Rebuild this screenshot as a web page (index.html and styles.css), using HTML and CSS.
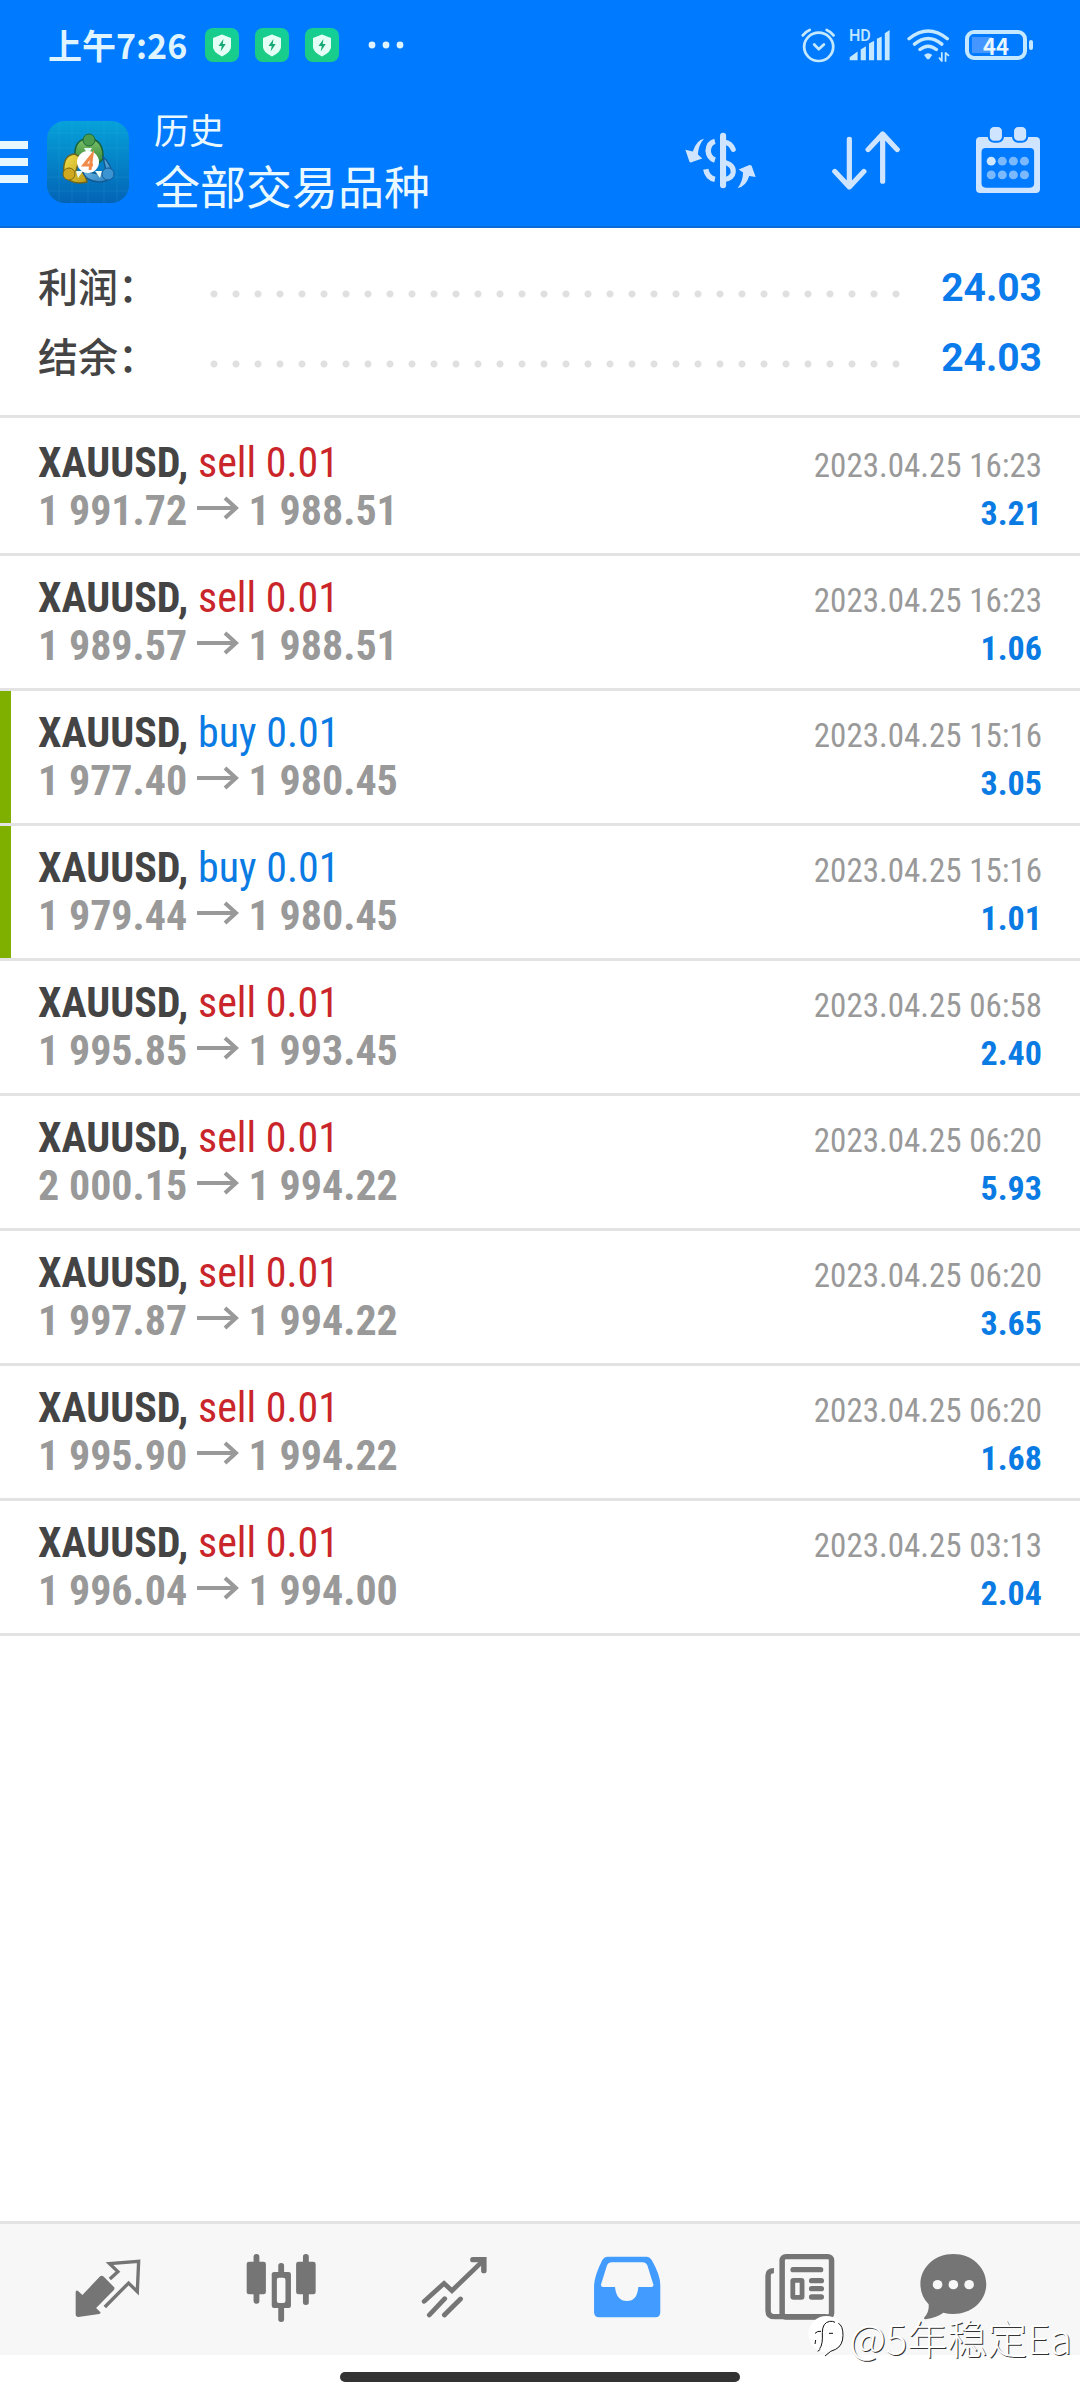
FILE: index.html
```html
<!DOCTYPE html>
<html lang="zh-CN">
<head>
<meta charset="utf-8">
<meta name="viewport" content="width=device-width, initial-scale=1">
<title>历史</title>
<link rel="stylesheet" href="styles.css">
</head>
<body>
<svg class="defs" aria-hidden="true">
  <defs>
    <linearGradient id="shieldBg" x1="0" y1="1" x2="1" y2="0"><stop offset="0" stop-color="#1ecb7c"/><stop offset="1" stop-color="#12cf9c"/></linearGradient>
    <symbol id="shield" viewBox="0 0 34 34">
      <rect width="34" height="34" rx="8" fill="url(#shieldBg)"/>
      <path d="M17 6.500l9 3.500v9q0 5-9 9.500q-9-4.500-9-9.500v-9z" fill="#e6fff6"/>
      <path d="M18.500 11l-5 7h3.200l-1 5.500l5-7.500h-3z" fill="#17a874"/>
    </symbol>
    <symbol id="arrow" viewBox="0 0 42 24">
      <path d="M0 12h39M28 2l11 10l-11 10" fill="none" stroke="#999" stroke-width="4"/>
    </symbol>
  </defs>
</svg>
<header class="top">
  <div class="status">
    <span class="clock">上午7:26</span>
    <div class="notices">
      <svg class="shield"><use href="#shield"/></svg>
      <svg class="shield"><use href="#shield"/></svg>
      <svg class="shield"><use href="#shield"/></svg>
    </div>
    <svg class="more" viewBox="0 0 36 8" fill="#dff4ff"><circle cx="4" cy="4" r="3.400"/><circle cx="18" cy="4" r="3.400"/><circle cx="32" cy="4" r="3.400"/></svg>
    <div class="system">
      <svg class="alarm" viewBox="756 84 104 104" preserveAspectRatio="none" fill="none" stroke="#c4e8ff" stroke-width="8" stroke-linecap="round" stroke-linejoin="round">
        <circle cx="810" cy="140" r="42"/><path d="M797 133l13 14l15-14M764 106q8-11 20-16M853 106q-8-11-20-16"/>
      </svg>
      <div class="signal">
        <span class="hd">HD</span>
        <svg class="bars" viewBox="898 88 122 92" preserveAspectRatio="none" fill="#c4e8ff">
          <path d="M900 178v-9l23-17v26zM932 178v-32l15-10v42zM956 178v-50l15-8v58zM979 178v-64l14-7v71zM1002 178v-80l14-10v90z"/>
        </svg>
      </div>
      <svg class="wifi" viewBox="1062 88 126 104" preserveAspectRatio="none" fill="none" stroke="#c4e8ff" stroke-width="10" stroke-linecap="round">
        <path d="M1068 120q56-46 112 0M1084 136q40-34 80 0M1100 152q24-20 48 0"/>
        <path d="M1112 168q12-10 24 0l-8 11q-4 3-8 0z" fill="#c4e8ff" stroke="none"/>
        <path d="M1164 160v28M1175 188v-28M1156 176l8 11M1175 162l10 9" stroke-width="5" stroke-linecap="butt"/>
      </svg>
      <div class="battery"><span class="level">44</span></div>
    </div>
  </div>
  <div class="toolbar">
    <button class="menu" aria-label="菜单"><span></span><span></span><span></span></button>
    <svg class="logo" viewBox="0 0 82 82">
      <defs>
        <linearGradient id="lb" x1="0" y1="0" x2="0" y2="1"><stop offset="0" stop-color="#06a2da"/><stop offset="1" stop-color="#0363b5"/></linearGradient>
        <linearGradient id="lg" x1="0" y1="0" x2="0" y2="1"><stop offset="0" stop-color="#80c169"/><stop offset="1" stop-color="#2a8437"/></linearGradient>
        <linearGradient id="ly" x1="0" y1="0" x2="1" y2="1"><stop offset="0" stop-color="#f1df4c"/><stop offset="1" stop-color="#bd9a16"/></linearGradient>
        <linearGradient id="lc" x1="0" y1="0" x2="1" y2="1"><stop offset="0" stop-color="#8bd0f0"/><stop offset="1" stop-color="#2178bd"/></linearGradient>
      </defs>
      <rect width="82" height="82" rx="18" fill="url(#lb)"/>
      <path d="M12 0v82M25 0v82M41 0v82M57 0v82M70 0v82M0 12h82M0 27h82M0 56h82M0 70h82" stroke="#4ac4ee" stroke-opacity=".15" fill="none"/>
      <path d="M28 36q-1-16 10-18h8q11 4 10 20l-6 6l-9-10z" fill="url(#lg)" stroke="#17633a" stroke-width="1.500"/>
      <path d="M17 53q-2-19 11-20l5 3l-4 14l9 2l2 9q-17 4-23-8z" fill="url(#ly)" stroke="#6a6520" stroke-width="1.500"/>
      <path d="M56 36q9 7 9 20q-11 9-24 2q-5-4-5-8l16 3l7-3z" fill="url(#lc)" stroke="#145a92" stroke-width="1.500"/>
      <circle cx="42" cy="19" r="6" fill="#4c9c4f" stroke="#1d6a39"/>
      <circle cx="22" cy="53" r="6" fill="#cfa820" stroke="#7a6716"/>
      <circle cx="61" cy="53" r="6" fill="#3b93d2" stroke="#155c98"/>
      <path d="M37 27h8l-4 7zM29 50h7l-5 7zM48 50h7l-2 7z" fill="#e8f8f2"/>
      <circle cx="41" cy="41" r="11" fill="#fff"/>
      <path d="M43 49l2-15l-8 10h9" fill="none" stroke="#f08a48" stroke-width="3"/>
    </svg>
    <div class="titles">
      <h1 class="title">历史</h1>
      <p class="subtitle">全部交易品种</p>
    </div>
    <div class="actions">
      <button class="action" aria-label="货币">
        <svg class="ico-dollar" viewBox="422 396 212 170" preserveAspectRatio="none" fill="none" stroke="#cfe5ff">
          <path d="M537 407v148" stroke-width="18" stroke-linecap="round"/>
          <path d="M540 426q20 3 27 22M540 486q29 8 27 30q-2 18-27 22" stroke-width="15" stroke-linecap="round"/>
          <path d="M513 424q-18 4-20 28q2 22 20 28M486 507q5 26 27 30" stroke-width="16"/>
          <path d="M481 416q-22 3-33 38l-22-5l12 36q4 4 10 0l28-10l-13-12q1-28 18-47zM580 563q24-4 34-36l19 3l-12-33q-4-4-10-1l-28 12l13 9q-1 27-16 46z" fill="#cfe5ff" stroke="none"/>
        </svg>
      </button>
      <button class="action" aria-label="排序">
        <svg class="ico-sort" viewBox="846 396 196 178" preserveAspectRatio="none" fill="none" stroke="#cfe5ff" stroke-width="15" stroke-linecap="round" stroke-linejoin="round">
          <path d="M896 421v144M854 518l42 47l42-47M992 548v-143M950 452l42-47l42 47"/>
        </svg>
      </button>
      <button class="action" aria-label="日期">
        <svg class="ico-cal" viewBox="1268 383 185 197" preserveAspectRatio="none">
          <path fill="#cfe5ff" fill-rule="evenodd" d="M1280 413h161q12 0 12 12v142q0 13-12 13h-161q-12 0-12-13v-142q0-12 12-12zM1296 446q-12 0-12 12v94q0 12 12 12h128q12 0 12-12v-94q0-12-12-12z"/>
          <rect x="1305" y="380" width="41" height="47" rx="15" fill="#cfe5ff" stroke="#007aff" stroke-width="6"/><rect x="1375" y="380" width="41" height="47" rx="15" fill="#cfe5ff" stroke="#007aff" stroke-width="6"/>
          <g fill="#7bb9ff"><circle cx="1312" cy="485" r="13" fill="#cfe8ff"/><circle cx="1344" cy="485" r="13"/><circle cx="1376" cy="485" r="13"/><circle cx="1408" cy="485" r="13"/><circle cx="1312" cy="526" r="13"/><circle cx="1344" cy="526" r="13"/><circle cx="1376" cy="526" r="13"/><circle cx="1408" cy="526" r="13"/></g>
        </svg>
      </button>
    </div>
  </div>
</header>
<main class="content">
  <dl class="summary">
    <div class="sum-row"><dt>利润：</dt><dd class="dots"></dd><dd class="total">24.03</dd></div>
    <div class="sum-row"><dt>结余：</dt><dd class="dots"></dd><dd class="total">24.03</dd></div>
  </dl>
  <ul class="deals">
    <li class="deal"><p class="line"><span><b>XAUUSD,</b> <span class="sell">sell 0.01</span></span><time>2023.04.25 16:23</time></p><p class="line price"><span>1 991.72 <svg class="arrow"><use href="#arrow"/></svg> 1 988.51</span><span class="profit">3.21</span></p></li>
    <li class="deal"><p class="line"><span><b>XAUUSD,</b> <span class="sell">sell 0.01</span></span><time>2023.04.25 16:23</time></p><p class="line price"><span>1 989.57 <svg class="arrow"><use href="#arrow"/></svg> 1 988.51</span><span class="profit">1.06</span></p></li>
    <li class="deal tp"><p class="line"><span><b>XAUUSD,</b> <span class="buy">buy 0.01</span></span><time>2023.04.25 15:16</time></p><p class="line price"><span>1 977.40 <svg class="arrow"><use href="#arrow"/></svg> 1 980.45</span><span class="profit">3.05</span></p></li>
    <li class="deal tp"><p class="line"><span><b>XAUUSD,</b> <span class="buy">buy 0.01</span></span><time>2023.04.25 15:16</time></p><p class="line price"><span>1 979.44 <svg class="arrow"><use href="#arrow"/></svg> 1 980.45</span><span class="profit">1.01</span></p></li>
    <li class="deal"><p class="line"><span><b>XAUUSD,</b> <span class="sell">sell 0.01</span></span><time>2023.04.25 06:58</time></p><p class="line price"><span>1 995.85 <svg class="arrow"><use href="#arrow"/></svg> 1 993.45</span><span class="profit">2.40</span></p></li>
    <li class="deal"><p class="line"><span><b>XAUUSD,</b> <span class="sell">sell 0.01</span></span><time>2023.04.25 06:20</time></p><p class="line price"><span>2 000.15 <svg class="arrow"><use href="#arrow"/></svg> 1 994.22</span><span class="profit">5.93</span></p></li>
    <li class="deal"><p class="line"><span><b>XAUUSD,</b> <span class="sell">sell 0.01</span></span><time>2023.04.25 06:20</time></p><p class="line price"><span>1 997.87 <svg class="arrow"><use href="#arrow"/></svg> 1 994.22</span><span class="profit">3.65</span></p></li>
    <li class="deal"><p class="line"><span><b>XAUUSD,</b> <span class="sell">sell 0.01</span></span><time>2023.04.25 06:20</time></p><p class="line price"><span>1 995.90 <svg class="arrow"><use href="#arrow"/></svg> 1 994.22</span><span class="profit">1.68</span></p></li>
    <li class="deal"><p class="line"><span><b>XAUUSD,</b> <span class="sell">sell 0.01</span></span><time>2023.04.25 03:13</time></p><p class="line price"><span>1 996.04 <svg class="arrow"><use href="#arrow"/></svg> 1 994.00</span><span class="profit">2.04</span></p></li>
  </ul>
</main>
<nav class="tabs">
  <a class="tab" href="#quotes" aria-label="行情">
    <svg viewBox="211 162 209 204" preserveAspectRatio="none" fill="#757575">
      <path d="M297 227q3 0 6 3l31 32q2 4-1 8l-53 54l13 13q1 4-4 5l-62 9q-8 0-8-8v-68q3-6 8-1l12 11l53-56q2-2 5-2z"/>
      <path d="M321 237l24-22l-25-24l87-7l-4 91l-26-26l-71 72" fill="none" stroke="#757575" stroke-width="10"/>
    </svg>
  </a>
  <a class="tab" href="#chart" aria-label="图表">
    <svg viewBox="714 162 204 204" preserveAspectRatio="none" fill="#757575">
      <rect x="736" y="162" width="17" height="149" rx="8"/><rect x="716" y="185" width="56" height="98" rx="7"/>
      <rect x="880" y="162" width="17" height="153" rx="8"/><rect x="860" y="185" width="57" height="98" rx="7"/>
      <rect x="808" y="189" width="17" height="177" rx="8"/><rect x="789" y="216" width="56" height="108" rx="7"/>
      <rect x="804" y="233" width="25" height="76" rx="6" fill="#f7f7f7"/>
    </svg>
  </a>
  <a class="tab" href="#trade" aria-label="交易">
    <svg viewBox="1216 162 204 204" preserveAspectRatio="none" fill="none" stroke="#757575" stroke-width="14" stroke-linecap="round" stroke-linejoin="miter">
      <path d="M1231 304l58-54l23 22l91-90M1246 345l45-49M1290 345l47-48"/><path d="M1373 179h32v33" stroke-width="16"/>
    </svg>
  </a>
  <a class="tab" href="#history" aria-label="历史" aria-current="page">
    <svg viewBox="152 162 204 204" preserveAspectRatio="none" fill="#429cff">
      <path fill-rule="evenodd" d="M198 170h112q10 0 16 10q25 45 25 75v82q0 15-14 15h-164q-15 0-15-15v-82q2-30 24-75q6-10 16-10zM208 187q-8 0-12 8l-18 59q0 7 7 7h34q4 42 35 42q30 0 33-42h38q7 0 6-7l-18-59q-4-8-12-8z"/>
    </svg>
  </a>
  <a class="tab" href="#news" aria-label="新闻">
    <svg viewBox="656 162 204 204" preserveAspectRatio="none" fill="none" stroke="#757575" stroke-width="16" stroke-linecap="round">
      <path d="M682 212q-17 0-17 15v105q0 18 20 18h150" stroke-linecap="butt"/><rect x="706" y="170" width="144" height="181" rx="11"/>
      <path d="M738 209h80M792 242h28M792 266h28M792 291h28"/><rect x="737" y="241" width="27" height="51" rx="2" stroke-width="14"/>
    </svg>
  </a>
  <a class="tab tab-chat" href="#chat" aria-label="消息">
    <svg viewBox="1096 162 204 204" preserveAspectRatio="none" fill="#757575">
      <path d="M1199 162c54 0 96 40 96 90s-42 90-96 90q-16 0-29-4q-18 14-52 20q-7-1-3-7q14-14 12-38q-24-25-24-61c0-50 42-90 96-90z"/>
      <g fill="#f7f7f7"><circle cx="1153" cy="254" r="14"/><circle cx="1199" cy="254" r="14"/><circle cx="1245" cy="254" r="14"/></g>
    </svg>
  </a>
</nav>
<footer class="gesture"><span class="pill"></span></footer>
<div class="watermark">
  <svg class="mark" viewBox="30 36 114 126"><circle cx="88" cy="90" r="54" fill="#fff"/><path d="M68 134q10-12 8-48q0-30 22-34q10-1 16 3M54 88q8-8 18-6M96 88h12M56 108l-2 12M70 136l-8 6M124 58q14 6 14 36t-22 42q-14 2-32 20" fill="none" stroke="#111" stroke-width="3"/></svg>
  <span>@5年稳定Ea</span>
</div>
</body>
</html>
```
FILE: styles.css
```css
* { box-sizing: border-box; margin: 0; padding: 0; }
body {
  position: relative;
  min-height: 100vh;
  display: flex;
  flex-direction: column;
  background: #fff;
  color: #444;
  font-family: Roboto, "Noto Sans CJK SC", sans-serif;
}
.defs { position: absolute; width: 0; height: 0; }
button { border: 0; background: none; }
ul { list-style: none; }
svg { display: block; flex: none; }

.top { background: #007aff; border-bottom: 2px solid #0a6bd8; }
.status { display: flex; align-items: center; height: 90px; padding: 0 48px; }
.clock { color: #dff4ff; font: 700 34px/40px "Noto Sans CJK SC", sans-serif; }
.notices { display: flex; gap: 16px; margin-left: 18px; }
.shield { width: 34px; height: 34px; }
.more { width: 36px; height: 8px; margin-left: 29px; }
.system { display: flex; align-items: center; gap: 13px; margin-left: auto; }
.alarm { width: 36px; height: 35px; }
.signal { position: relative; width: 42px; height: 31px; }
.hd { position: absolute; left: 0; top: -2px; color: #c4e8ff; font: 500 16px/16px Roboto, sans-serif; }
.bars { width: 42px; height: 31px; }
.wifi { width: 43px; height: 35px; margin-left: 3px; }
.battery {
  position: relative;
  width: 62px;
  height: 30px;
  margin: 0 5px 0 2px;
  border: 4px solid #c4e8ff;
  border-radius: 9px;
  background: linear-gradient(#4597ff, #4597ff) 3px 3px / 20px 16px no-repeat;
}
.battery::after { content: ""; position: absolute; right: -10px; top: 6px; width: 4px; height: 10px; border-radius: 2px; background: #c4e8ff; }
.level { display: block; color: #e8f6ff; font: 700 22px/22px "Noto Sans CJK SC", sans-serif; text-align: center; }

.toolbar { display: flex; align-items: center; height: 136px; padding: 8px 40px 0 0; }
.menu { display: flex; flex-direction: column; gap: 9px; width: 28px; }
.menu span { height: 8px; background: #e6f7ff; }
.logo { width: 82px; height: 82px; margin-left: 19px; }
.titles { margin: 0 0 6px 25px; color: #eaf9ff; font-family: "Noto Sans CJK SC", sans-serif; }
.title { font-size: 35px; line-height: 50px; font-weight: 400; }
.subtitle { font-size: 46px; line-height: 60px; }
.actions { display: flex; align-items: center; gap: 76px; margin: 0 0 4px auto; }
.ico-dollar { width: 72px; height: 57px; }
.ico-sort { width: 68px; height: 59px; }
.ico-cal { width: 64px; height: 66px; }

.content { flex: 1; }
.summary { padding: 24px 38px 23px 38px; border-bottom: 3px solid #e3e3e3; }
.sum-row { display: flex; align-items: center; height: 70px; }
.sum-row dt { width: 165px; padding-bottom: 4px; font: 500 40px/60px "Noto Sans CJK SC", sans-serif; }
.dots { flex: 1; height: 22px; margin-top: 14px; background: radial-gradient(circle, #e0e0e0 3px, transparent 4px) 0 0 / 22px 22px repeat-x; }
.total { width: 135px; padding-top: 2px; color: #0b7bec; font-size: 39px; font-weight: 700; text-align: right; }

.deals { padding-top: 3px; }
.deal { position: relative; padding: 18px 38px; border-bottom: 3px solid #e3e3e3; font: 400 42px/48px "Roboto Condensed", "Liberation Sans Narrow", Roboto, sans-serif; }
.tp::before { content: ""; position: absolute; left: 0; top: 0; bottom: 0; width: 11px; background: #7fb000; }
.line { display: flex; justify-content: space-between; align-items: baseline; height: 48px; }
.sell { color: #c9252b; }
.buy { color: #0b7be4; }
.line time { color: #999; font-size: 33px; }
.price { color: #999; font-weight: 700; }
.profit { color: #0b7be4; font-size: 34px; }
.arrow { display: inline-block; width: 42px; height: 24px; vertical-align: 5px; }

.tabs { display: flex; align-items: center; height: 134px; padding: 0 60px 4px 22px; background: #f7f7f7; border-top: 3px solid #e3e3e3; }
.tab { flex: 0 0 16vw; display: flex; justify-content: center; }
.tab svg { width: 70px; height: 68px; }
.tab-chat { flex: 1; }
.gesture { display: flex; justify-content: center; align-items: center; height: 45px; padding-bottom: 2px; }
.pill { width: 37%; height: 10px; border-radius: 5px; background: #333; }
.watermark { position: absolute; right: 8px; bottom: 38px; display: flex; align-items: center; gap: 4px; color: #fff; font: 300 40px/50px "Noto Sans CJK SC", sans-serif; text-shadow: 1px 1px 0 #333; }
.mark { width: 38px; height: 42px; }
```
